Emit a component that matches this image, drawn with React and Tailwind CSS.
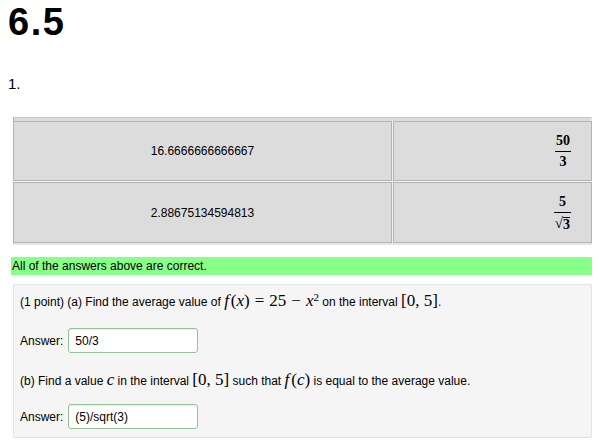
import React from "react";

const serif = "font-['Liberation_Serif','DejaVu_Serif',serif]";

function M({ children }) {
  return <span className={`${serif} text-[17px]`}>{children}</span>;
}
function I({ children, r = false }) {
  return <span className={r ? "italic mr-[2px]" : "italic"}>{children}</span>;
}
function Op({ children }) {
  return <span className="mx-[5px]">{children}</span>;
}

function Frac({ num, den }) {
  return (
    <span className={`inline-flex flex-col items-center ${serif} font-bold text-[14px] leading-[14px]`}>
      <span className="px-[1px] pb-[3px]">{num}</span>
      <span className="h-[1px] w-full bg-black" />
      <span className="px-[1px] pt-[3px]">{den}</span>
    </span>
  );
}

function Sqrt3() {
  return (
    <span className="inline-flex items-end">
      <span className="text-[15px] leading-[15px] font-normal">√</span>
      <span className="border-t border-black leading-[13px]">3</span>
    </span>
  );
}

function AnswerRow({ value }) {
  return (
    <div className="flex items-center gap-[5px]">
      <span>Answer:</span>
      <div className="w-[130px] h-[25px] bg-white border border-[#94c494] rounded-[3px] shadow-[inset_0_1px_1px_rgba(0,0,0,0.08)] flex items-center px-[6px]">
        {value}
      </div>
    </div>
  );
}

export default function App() {
  return (
    <div className="bg-white w-[600px] h-[447px] overflow-hidden font-['Liberation_Sans',Arial,sans-serif] text-[12px] text-black">
      <h1 className="pl-[8px] pt-[3px] text-[38px] leading-[38px] font-bold tracking-[1.5px]">6.5</h1>
      <div className="pl-[8px] mt-[35px] text-[15px] leading-[15px]">1.</div>

      <div className="ml-[13px] mr-[8px] mt-[26px]">
        <div className="border-t border-[#c6c6c6] bg-[#dcdcdc] h-[4px] border-l border-l-[#b0b0b0] border-r border-r-[#e8e8e8]" />
        <div className="grid grid-cols-[379px_1fr] gap-[1px] bg-[#f2f2f2] border-b-[2px] border-[#e6e6e6]">
          <div className="h-[60px] bg-[#dcdcdc] border border-[#b4b4b4] flex items-center justify-center">16.6666666666667</div>
          <div className="h-[60px] bg-[#dcdcdc] border border-[#b4b4b4] flex items-center justify-end pr-[20px]">
            <Frac num="50" den="3" />
          </div>
          <div className="h-[61px] bg-[#dcdcdc] border border-[#b4b4b4] flex items-center justify-center">2.88675134594813</div>
          <div className="h-[61px] bg-[#dcdcdc] border border-[#b4b4b4] flex items-center justify-end pr-[20px]">
            <Frac num="5" den={<Sqrt3 />} />
          </div>
        </div>
      </div>

      <div className="ml-[11px] mr-[8px] mt-[12px] h-[18px] bg-[#88ff88] pl-[1px] leading-[18px]">
        All of the answers above are correct.
      </div>

      <div className="ml-[13px] mr-[8px] mt-[9px] h-[154px] bg-[#f5f5f5] border border-[#e3e3e3] rounded-[2px] pl-[6px] pt-[7px]">
        <div className="h-[18px] leading-[18px]">
          (1 point) (a) Find the average value of{" "}
          <M>
            <I r>f</I>(<I>x</I>)<Op>=</Op>25<Op>−</Op><I>x</I>
            <sup className="text-[11px]">2</sup>
          </M>{" "}
          on the interval <M>[0, 5]</M>.
        </div>
        <div className="mt-[18px]">
          <AnswerRow value="50/3" />
        </div>
        <div className="mt-[18px] h-[18px] leading-[18px]">
          (b) Find a value <M><I>c</I></M> in the interval <M>[0, 5]</M> such that{" "}
          <M>
            <I r>f</I>(<I>c</I>)
          </M>{" "}
          is equal to the average value.
        </div>
        <div className="mt-[15px]">
          <AnswerRow value="(5)/sqrt(3)" />
        </div>
      </div>
    </div>
  );
}
